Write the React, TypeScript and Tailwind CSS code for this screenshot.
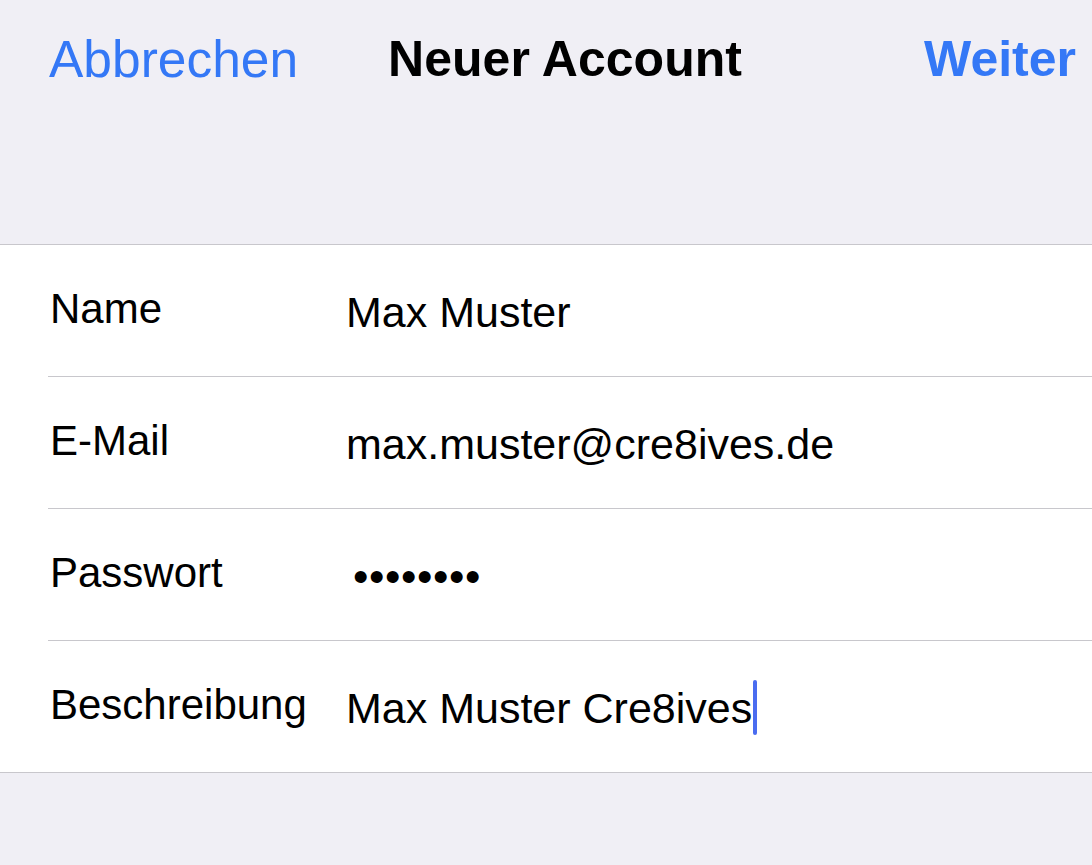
import React from "react";

const rows: { label: string; value: string; kind?: "password" | "caret" }[] = [
  { label: "Name", value: "Max Muster" },
  { label: "E-Mail", value: "max.muster@cre8ives.de" },
  { label: "Passwort", value: "••••••••", kind: "password" },
  { label: "Beschreibung", value: "Max Muster Cre8ives", kind: "caret" },
];

export default function App() {
  return (
    <div
      className="w-[1092px] h-[865px] bg-[#f0eff5] overflow-hidden"
      style={{ fontFamily: '"Liberation Sans", Arial, sans-serif' }}
    >
      <div className="h-[245px] flex items-start pt-[34px] pl-[49px] pr-[16px] border-b border-[#c8c7cc]">
        <span className="text-[51.5px] leading-[51px] text-[#3478f6]">Abbrechen</span>
        <span className="text-[50px] leading-[51px] font-bold text-black ml-[90px]">Neuer Account</span>
        <span className="text-[50px] leading-[51px] font-bold text-[#3478f6] ml-auto">Weiter</span>
      </div>
      <div className="bg-white border-b border-[#c8c7cc]">
        {rows.map((r, i) => (
          <div
            key={r.label}
            className={
              i < rows.length - 1
                ? "ml-[48px] h-[132px] flex items-center border-b border-[#c8c7cc]"
                : "ml-[48px] h-[131px] flex items-center"
            }
          >
            <span className="w-[298px] shrink-0 pl-[2px] text-[42px] leading-none text-black -mt-[3px]">
              {r.label}
            </span>
            {r.kind === "password" ? (
              <span className="text-[44px] leading-none text-black tracking-[0.6px] pl-[7px] mt-[4px]">
                {r.value}
              </span>
            ) : (
              <span className="flex items-center text-[43px] leading-none text-black mt-[3px]">
                {r.value}
                {r.kind === "caret" && (
                  <span className="inline-block w-[4px] h-[55px] rounded-full bg-[#4a6cf0] ml-[1px] -mt-[2px]" />
                )}
              </span>
            )}
          </div>
        ))}
      </div>
    </div>
  );
}
